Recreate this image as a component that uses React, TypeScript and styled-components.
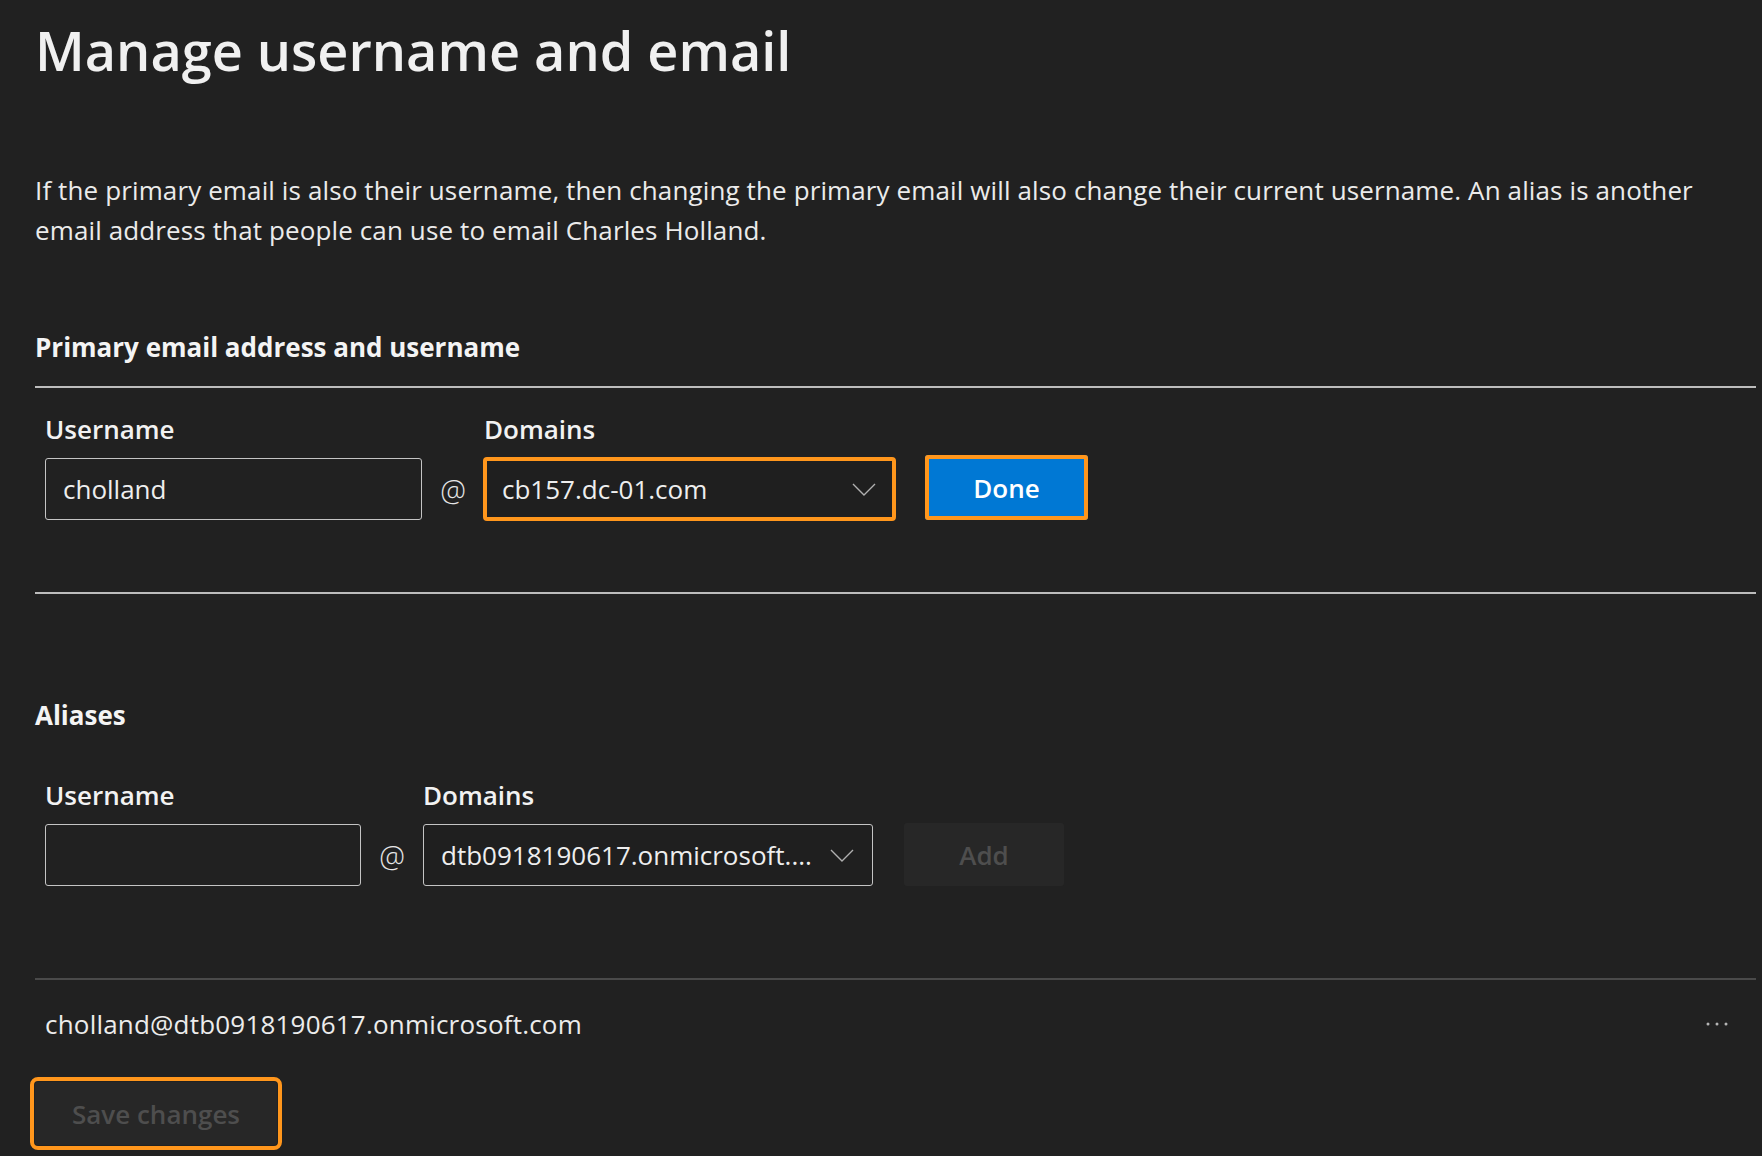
import React from "react";
import styled, { createGlobalStyle, css } from "styled-components";

const Global = createGlobalStyle`
  html, body {
    margin: 0;
    padding: 0;
    background: #212121;
  }
  body {
    font-family: "Open Sans", "Noto Sans", Lato, sans-serif;
    color: #f2f2f2;
  }
`;

const Page = styled.main`
  min-height: 1156px;
  padding: 15px 6px 0 35px;
  box-sizing: border-box;
  background: #212121;
`;

const Title = styled.h1`
  margin: 0;
  font-size: 54px;
  line-height: 70px;
  font-weight: 600;
  color: #f0f0f0;
`;

const Intro = styled.p`
  margin: 85px 0 0;
  max-width: 1712px;
  font-size: 26px;
  line-height: 40px;
  letter-spacing: 0.12px;
  color: #ebebeb;
`;

const SectionTitle = styled.h2<{ $top: number }>`
  margin: ${(p) => p.$top}px 0 0;
  font-size: 26px;
  line-height: 36px;
  font-weight: 700;
  color: #f4f4f4;
`;

const Rule = styled.hr<{ $dim?: boolean; $top: number }>`
  margin: ${(p) => p.$top}px 0 0;
  border: none;
  height: 2px;
  background: ${(p) => (p.$dim ? "#4a4a4a" : "#bdbdbd")};
`;

const FormRow = styled.div<{ $top: number }>`
  display: flex;
  align-items: flex-end;
  margin-top: ${(p) => p.$top}px;
  padding-left: 10px;
`;

const Field = styled.div`
  display: flex;
  flex-direction: column;
`;

const Label = styled.label`
  font-size: 26px;
  line-height: 32px;
  font-weight: 600;
  color: #f2f2f2;
  margin-bottom: 13px;
`;

const highlight = css`
  outline: 4px solid #ff961c;
`;

const TextBox = styled.div<{ $w: number }>`
  width: ${(p) => p.$w}px;
  height: 62px;
  box-sizing: border-box;
  border: 1px solid #c4c4c4;
  border-radius: 3px;
  padding: 0 17px;
  display: flex;
  align-items: center;
  font-size: 26px;
  color: #eeeeee;
`;

const At = styled.span`
  width: 62px;
  height: 62px;
  display: flex;
  align-items: center;
  justify-content: center;
  font-size: 29px;
  font-weight: 300;
  color: #e6e6e6;
`;

const Select = styled.div<{ $w: number; $hl?: boolean }>`
  width: ${(p) => p.$w}px;
  height: 62px;
  box-sizing: border-box;
  border: 1px solid #c4c4c4;
  border-radius: 3px;
  padding: 0 18px 0 17px;
  display: flex;
  align-items: center;
  justify-content: space-between;
  gap: 12px;
  font-size: 26px;
  color: #eeeeee;
  background: #1f1f1f;
  ${(p) =>
    p.$hl &&
    css`
      ${highlight};
      outline-offset: -3px;
    `}
`;

const SelectText = styled.span`
  white-space: nowrap;
  overflow: hidden;
`;

const Button = styled.button<{ $primary?: boolean; $hl?: boolean; $w: number; $h: number }>`
  width: ${(p) => p.$w}px;
  height: ${(p) => p.$h}px;
  border: none;
  border-radius: 3px;
  font-family: inherit;
  font-size: 26px;
  font-weight: 600;
  background: ${(p) => (p.$primary ? "#0078d4" : "#272727")};
  color: ${(p) => (p.$primary ? "#ffffff" : "#4e4e4e")};
  cursor: pointer;
  ${(p) =>
    p.$hl &&
    css`
      ${highlight};
      outline-offset: ${p.$primary ? "-4px" : "1px"};
    `}
`;

const AliasRow = styled.div`
  display: flex;
  align-items: center;
  justify-content: space-between;
  margin-top: 24px;
  padding: 0 28px 0 10px;
  font-size: 26px;
  line-height: 40px;
  letter-spacing: 0.2px;
  color: #ececec;
`;

const Footer = styled.div`
  margin-top: 38px;
`;

const Chevron = () => (
  <svg width="24" height="13" viewBox="0 0 24 13" fill="none">
    <polyline points="1,1 12,12 23,1" stroke="#b0b0b0" strokeWidth="1.4" />
  </svg>
);

const Dots = () => (
  <svg width="22" height="4" viewBox="0 0 22 4">
    <circle cx="2" cy="2" r="1.5" fill="#b5b5b5" />
    <circle cx="11" cy="2" r="1.5" fill="#b5b5b5" />
    <circle cx="20" cy="2" r="1.5" fill="#b5b5b5" />
  </svg>
);

export default function App() {
  return (
    <Page>
      <Global />
      <Title>Manage username and email</Title>
      <Intro>
        If the primary email is also their username, then changing the primary email will also
        change their current username. An alias is another email address that people can use to
        email Charles Holland.
      </Intro>

      <SectionTitle $top={79}>Primary email address and username</SectionTitle>
      <Rule $top={21} />
      <FormRow $top={25}>
        <Field>
          <Label>Username</Label>
          <TextBox $w={377}>cholland</TextBox>
        </Field>
        <At>@</At>
        <Field>
          <Label>Domains</Label>
          <Select $w={411} $hl>
            <SelectText>cb157.dc-01.com</SelectText>
            <Chevron />
          </Select>
        </Field>
        <Button $primary $hl $w={163} $h={65} style={{ marginLeft: 30 }}>
          Done
        </Button>
      </FormRow>
      <Rule $top={72} />

      <SectionTitle $top={103}>Aliases</SectionTitle>
      <FormRow $top={46}>
        <Field>
          <Label>Username</Label>
          <TextBox $w={316} />
        </Field>
        <At>@</At>
        <Field>
          <Label>Domains</Label>
          <Select $w={450}>
            <SelectText>dtb0918190617.onmicrosoft....</SelectText>
            <Chevron />
          </Select>
        </Field>
        <Button $w={160} $h={63} style={{ marginLeft: 31 }} disabled>
          Add
        </Button>
      </FormRow>
      <Rule $dim $top={92} />

      <AliasRow>
        <span>cholland@dtb0918190617.onmicrosoft.com</span>
        <Dots />
      </AliasRow>

      <Footer>
        <Button $hl $w={242} $h={63} disabled>
          Save changes
        </Button>
      </Footer>
    </Page>
  );
}
